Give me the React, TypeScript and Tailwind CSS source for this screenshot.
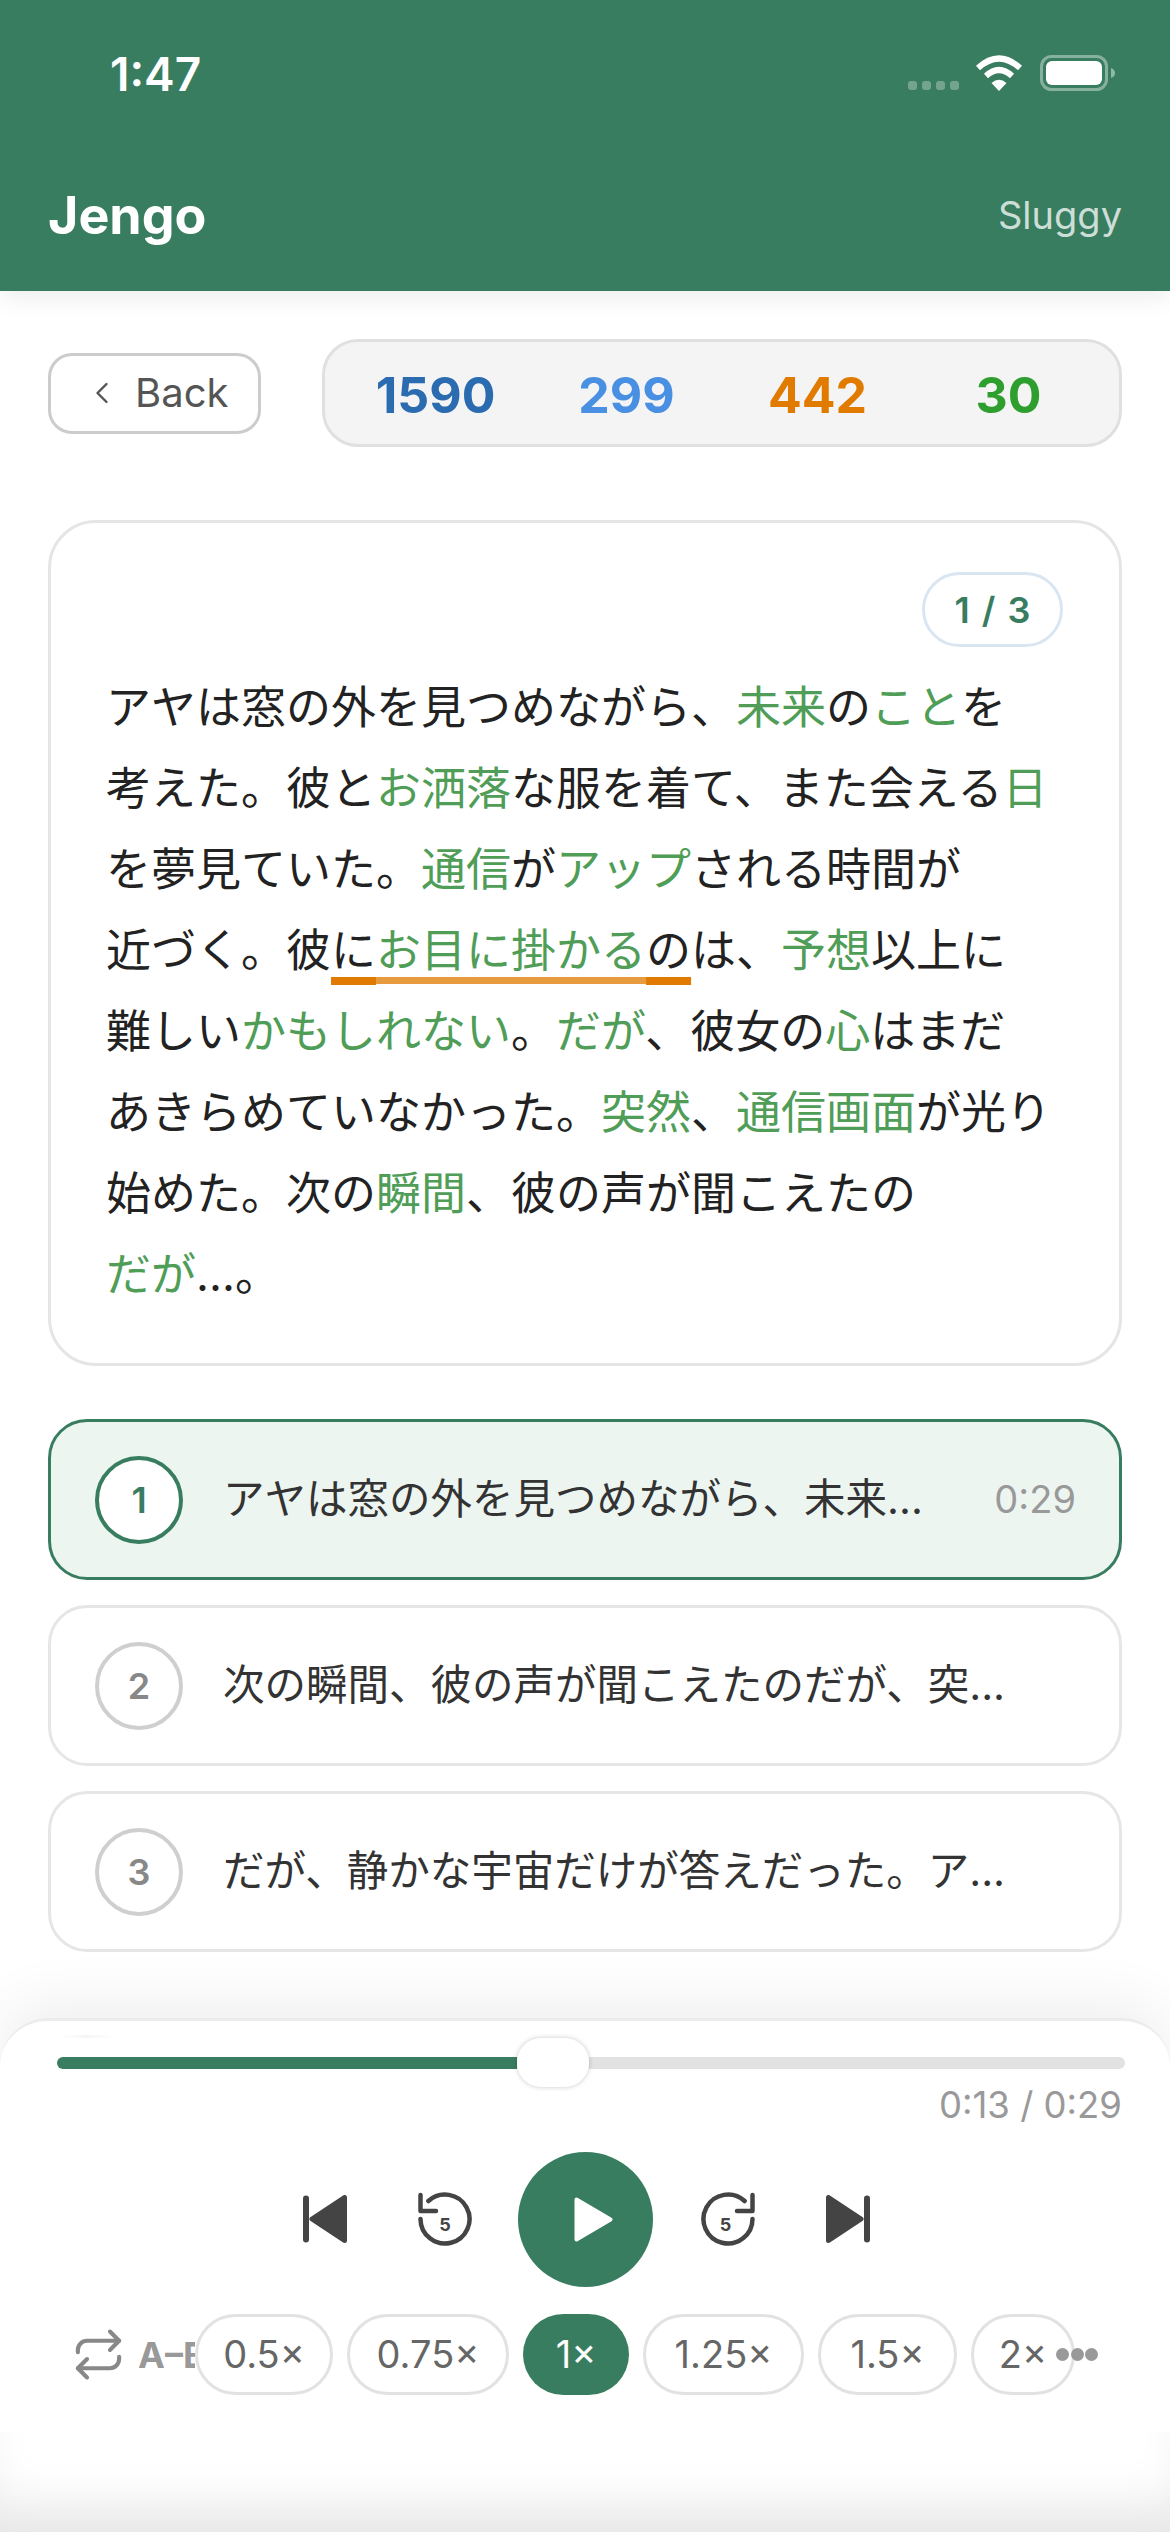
import { ChevronLeft, Repeat } from "lucide-react";

const G = ({ children }: { children: React.ReactNode }) => <span className="text-[#4f9d57]">{children}</span>;

const tracks = [
    { n: 1, text: "アヤは窓の外を見つめながら、未来...", time: "0:29", active: true },
    { n: 2, text: "次の瞬間、彼の声が聞こえたのだが、突...", time: "", active: false },
    { n: 3, text: "だが、静かな宇宙だけが答えだった。ア...", time: "", active: false },
];

const stats = [
    { value: "1590", color: "text-[#2b6cb0]" },
    { value: "299", color: "text-[#4a90e2]" },
    { value: "442", color: "text-[#e07b00]" },
    { value: "30", color: "text-[#2e9e2e]" },
];

const speeds = [
    { label: "0.5×", width: "w-[138px]" },
    { label: "0.75×", width: "w-[162px]" },
    { label: "1×", width: "w-[106px]", active: true },
    { label: "1.25×", width: "w-[161px]" },
    { label: "1.5×", width: "w-[139px]" },
    { label: "2×", width: "w-[104px]" },
];

function StatusBar() {
    return (
        <div className="h-[146px] pl-[110px] pr-[55px] flex items-center justify-between">
            <span className="text-[46px] font-semibold text-white translate-y-[1px]">1:47</span>
            <div className="flex items-end gap-[17px]">
                <div className="flex gap-[5px] pb-[1px] mr-[-1px]">
                    <div className="w-[9px] h-[9px] rounded-[3px] bg-white/30" />
                    <div className="w-[9px] h-[9px] rounded-[3px] bg-white/30" />
                    <div className="w-[9px] h-[9px] rounded-[3px] bg-white/30" />
                    <div className="w-[9px] h-[9px] rounded-[3px] bg-white/30" />
                </div>
                <svg width="48" height="36" viewBox="0 0 48 36" fill="none">
                    <path d="M3 13 Q24 -6 45 13" stroke="white" strokeWidth="6" />
                    <path d="M11 21 Q24 9 37 21" stroke="white" strokeWidth="6" />
                    <path d="M16.5 28 Q24 21.5 31.5 28 L24 36 Z" fill="white" />
                </svg>
                <svg width="75" height="36" viewBox="0 0 75 36" fill="none">
                    <rect x="1.5" y="1.5" width="65" height="33" rx="10" stroke="white" strokeOpacity="0.4" strokeWidth="3" />
                    <rect x="6" y="6" width="56" height="24" rx="6" fill="white" />
                    <path d="M71 13 C74 14 75 16 75 18 C75 20 74 22 71 23 Z" fill="white" fillOpacity="0.45" />
                </svg>
            </div>
        </div>
    );
}

function TrackRow({ n, text, time, active }: { n: number; text: string; time: string; active: boolean }) {
    return (
        <div className={`h-[161px] rounded-[39px] border-[3px] pl-[44px] pr-[43px] flex items-center ${active ? "bg-[#edf5f1] border-[#387d5f]" : "bg-white border-[#e6e6e6]"}`}>
            <div className={`w-[88px] h-[88px] shrink-0 rounded-full border-[4px] bg-white flex items-center justify-center text-[36px] font-semibold ${active ? "border-[#387d5f] text-[#387d5f]" : "border-[#cfcfcf] text-[#888888]"}`}>
                {n}
            </div>
            <span className="ml-[40px] flex-1 text-[41.5px] text-[#333333] whitespace-nowrap">{text}</span>
            {time && <span className="text-[38px] text-[#999999]">{time}</span>}
        </div>
    );
}

function SkipIcon({ flip }: { flip?: boolean }) {
    return (
        <svg width="44" height="48" viewBox="0 0 44 48" className={flip ? "-scale-x-100" : ""}>
            <rect x="0" y="0.5" width="6" height="47" rx="3" fill="#444444" />
            <path d="M9 24 L41.5 2.5 V45.5 Z" fill="#444444" stroke="#444444" strokeWidth="5" strokeLinejoin="round" />
        </svg>
    );
}

function SeekIcon({ flip }: { flip?: boolean }) {
    const t = flip ? "translate(55 0) scale(-1 1)" : undefined;
    return (
        <svg width="55" height="56" viewBox="0 0 55 56" fill="none">
            <g transform={t} stroke="#444444" strokeWidth="4.5" strokeLinecap="round" strokeLinejoin="round">
                <path d="M10.4 10 A24.5 24.5 0 1 1 2.5 28" />
                <path d="M2.5 4 V20 H18" />
            </g>
            <text x={flip ? 25.5 : 27} y="39.5" textAnchor="middle" fontSize="18" fontWeight="700" fill="#444444">5</text>
        </svg>
    );
}

export default function App() {
    return (
        <div className="w-[1170px] h-[2532px] overflow-hidden bg-white flex flex-col font-['Inter','Noto_Sans_CJK_JP',sans-serif]">
            {/* Header */}
            <header className="h-[291px] shrink-0 bg-[#387d5f] shadow-[0_6px_24px_rgba(0,0,0,0.08)] relative z-10">
                <StatusBar />
                <div className="h-[145px] px-[48px] pb-[6px] flex items-center justify-between">
                    <span className="text-[52px] font-bold text-white">Jengo</span>
                    <span className="text-[38px] text-white/75">Sluggy</span>
                </div>
            </header>

            <main className="px-[48px]">
                {/* Back + stats */}
                <div className="mt-[48px] flex items-center gap-[61px]">
                    <button className="w-[213px] h-[81px] shrink-0 rounded-[24px] border-[3px] border-[#cccccc] bg-white flex items-center pl-[40px] gap-[14px] text-[40px] text-[#555555]">
                        <ChevronLeft className="w-[36px] h-[36px] -ml-[7px]" strokeWidth={1.6} />
                        <span className="ml-[1px]">Back</span>
                    </button>
                    <div className="flex-1 h-[108px] rounded-[36px] border-[3px] border-[#e0e0e0] bg-[#f4f4f4] px-[15px] pt-[5px] flex items-center">
                        {stats.map((s) => (
                            <span key={s.value} className={`flex-1 text-center text-[50px] font-bold ${s.color}`}>{s.value}</span>
                        ))}
                    </div>
                </div>

                {/* Passage */}
                <section className="mt-[73px] h-[846px] rounded-[48px] border-[3px] border-[#e5e5e5] pl-[55px] pr-[56px] pt-[49px]">
                    <div className="flex justify-end mb-[20px]">
                        <span className="w-[141px] h-[75px] rounded-[38px] border-[3px] border-[#d9e6f2] flex items-center justify-center text-[36px] font-semibold text-[#387d5f] [word-spacing:3px]">1 / 3</span>
                    </div>
                    <p className="text-[45px] leading-[81px] text-[#222222] whitespace-nowrap">
                        アヤは窓の外を見つめながら、<G>未来</G>の<G>こと</G>を<br />
                        考えた。彼と<G>お洒落</G>な服を着て、また会える<G>日</G><br />
                        を夢見ていた。<G>通信</G>が<G>アップ</G>される時間が<br />
                        近づく。彼
                        <span className="underline decoration-8 underline-offset-[10px] decoration-[#e07b00] [text-decoration-skip-ink:none]">に</span>
                        <span className="text-[#4f9d57] underline decoration-[7px] underline-offset-[10px] decoration-[#e89a3f] [text-decoration-skip-ink:none]">お目に掛かる</span>
                        <span className="underline decoration-8 underline-offset-[10px] decoration-[#e07b00] [text-decoration-skip-ink:none]">の</span>
                        は、<G>予想</G>以上に<br />
                        難しい<G>かもしれない</G>。<G>だが</G>、彼女の<G>心</G>はまだ<br />
                        あきらめていなかった。<G>突然</G>、<G>通信画面</G>が光り<br />
                        始めた。次の<G>瞬間</G>、彼の声が聞こえたの<br />
                        <G>だが</G>...。
                    </p>
                </section>

                {/* Sentences */}
                <div className="mt-[53px] flex flex-col gap-[25px]">
                    {tracks.map((t) => (
                        <TrackRow key={t.n} {...t} />
                    ))}
                </div>
            </main>

            {/* Player */}
            <section className="mt-[66px] flex-1 rounded-t-[48px] border-t-[3px] border-[#ececec] bg-white shadow-[0_-14px_60px_rgba(0,0,0,0.07)] flex flex-col">
                <div className="mt-[14px] ml-[60px] w-[55px] h-[3px] bg-gradient-to-r from-transparent via-[#f5f5f5] to-transparent" />
                <div className="ml-[57px] mr-[45px] h-[49px] flex items-center">
                    <div className="w-[460px] h-[12px] rounded-l-full bg-[#387d5f]" />
                    <div className="w-[72px] h-[49px] shrink-0 rounded-[24px] bg-white shadow-[0_0_5px_rgba(0,0,0,0.22)] relative" />
                    <div className="flex-1 h-[12px] rounded-r-full bg-[#e2e2e2]" />
                </div>
                <div className="-mt-[4px] pr-[48px] text-right text-[36.5px] leading-[44px] text-[#999999]">0:13 / 0:29</div>

                <div className="mt-[24px] h-[136px] flex items-center justify-center pl-[3px]">
                    <SkipIcon />
                    <div className="ml-[71px]"><SeekIcon /></div>
                    <button className="ml-[45px] w-[135px] h-[135px] rounded-full bg-[#387d5f] flex items-center justify-center">
                        <svg width="39" height="45" viewBox="0 0 39 45" className="ml-[15px]">
                            <path d="M2.5 2.5 L36.5 22.5 L2.5 42.5 Z" fill="white" stroke="white" strokeWidth="4" strokeLinejoin="round" />
                        </svg>
                    </button>
                    <div className="ml-[47px]"><SeekIcon flip /></div>
                    <div className="ml-[71px]"><SkipIcon flip /></div>
                </div>

                {/* Loop + speed chips */}
                <div className="mt-[27px] h-[81px] pl-[71px] flex items-center">
                    <div className="w-[124px] overflow-hidden flex items-center whitespace-nowrap text-[#999999]">
                        <Repeat className="w-[55px] h-[55px] shrink-0 text-[#888888]" strokeWidth={1.8} />
                        <span className="ml-[12px] text-[36px] font-bold">A–B</span>
                    </div>
                    <div className="flex gap-[14px]">
                        {speeds.map((s) => (
                            <div
                                key={s.label}
                                className={`${s.width} h-[81px] rounded-full flex items-center justify-center text-[38px] ${s.active ? "bg-[#387d5f] text-white" : "border-[3px] border-[#e2e2e2] text-[#666666]"}`}
                            >
                                {s.label}
                            </div>
                        ))}
                    </div>
                    <div className="-ml-[19px] flex gap-[1.5px]">
                        <div className="w-[13px] h-[13px] rounded-full bg-[#999999]" />
                        <div className="w-[13px] h-[13px] rounded-full bg-[#999999]" />
                        <div className="w-[13px] h-[13px] rounded-full bg-[#999999]" />
                    </div>
                </div>

                <div className="mt-auto h-[100px] shadow-[inset_0_-45px_50px_-20px_rgba(0,0,0,0.1)]" />
            </section>
        </div>
    );
}
